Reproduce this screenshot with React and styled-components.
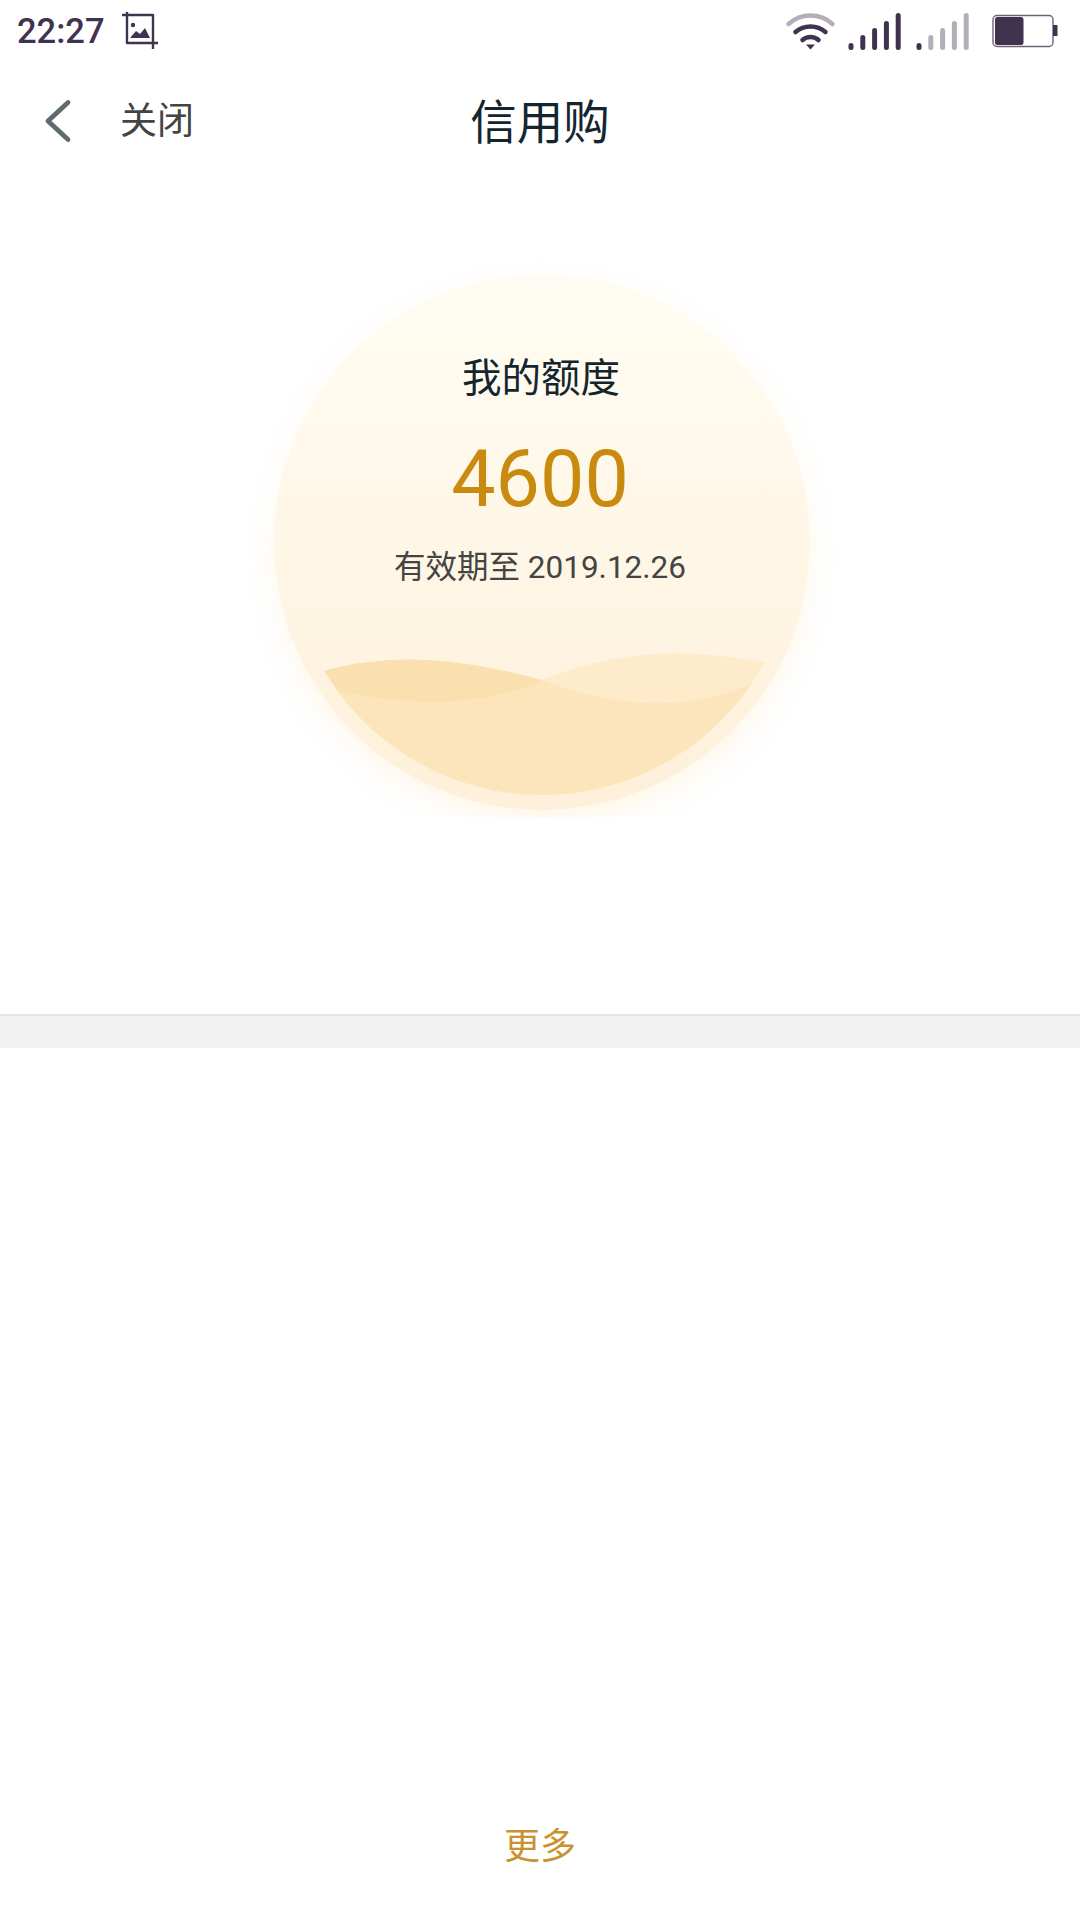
import React from "react";
import styled, { createGlobalStyle } from "styled-components";

const GlobalStyle = createGlobalStyle`
  html, body {
    margin: 0;
    padding: 0;
    background: #fff;
  }
  body {
    font-family: Roboto, "Noto Sans CJK SC", sans-serif;
  }
`;

const Page = styled.div`
  width: 1080px;
  height: 1920px;
  display: flex;
  flex-direction: column;
  background: #fff;
  overflow: hidden;
`;

// Status bar
const StatusBar = styled.div`
  height: 62px;
  display: flex;
  align-items: center;
  justify-content: space-between;
  padding-left: 17px;
`;

const StatusLeft = styled.div`
  display: flex;
  align-items: center;
  gap: 17px;
`;

const Time = styled.span`
  font-size: 34.5px;
  font-weight: 500;
  line-height: 64px;
  color: #3f334f;
`;

const StatusIcons = styled.svg`
  display: block;
  width: 300px;
  height: 62px;
`;

// Nav
const NavBar = styled.div`
  height: 112px;
  display: flex;
  align-items: center;
  position: relative;
`;

const BackButton = styled.div`
  width: 120px;
  display: flex;
  align-items: center;
  padding: 6px 0 0 42px;
  box-sizing: border-box;
`;

const CloseText = styled.span`
  font-size: 37px;
  color: #444;
`;

const Title = styled.h1`
  position: absolute;
  left: 0;
  right: 0;
  margin: 0;
  text-align: center;
  font-size: 46.5px;
  font-weight: 400;
  color: #14252e;
`;

// Credit circle
const Hero = styled.section`
  height: 643px;
  overflow: hidden;
  display: flex;
  justify-content: center;
  padding: 100px 0 0 4px;
  box-sizing: border-box;
`;

const Circle = styled.div`
  position: relative;
  flex: none;
  width: 536px;
  height: 536px;
  padding-right: 4px;
  box-sizing: border-box;
  border-radius: 50%;
  background: linear-gradient(180deg, #fffdf3 0%, #fef0da 100%);
  box-shadow: 0 12px 28px -4px rgba(253, 226, 178, 0.34);
  display: flex;
  flex-direction: column;
  align-items: center;
`;

const Waves = styled.svg`
  position: absolute;
  left: 0;
  top: 0;
  width: 536px;
  height: 536px;
`;

const CircleLabel = styled.div`
  position: relative;
  left: 1px;
  margin-top: 77px;
  font-size: 39.5px;
  line-height: 56px;
  color: #14252e;
`;

const Amount = styled.div`
  position: relative;
  margin-top: 25px;
  font-size: 79px;
  line-height: 94px;
  color: #c98a10;
`;

const Expiry = styled.div`
  position: relative;
  margin-top: 20px;
  font-size: 31.5px;
  line-height: 44px;
  color: #444;
`;

const Spacer = styled.div`
  height: 197px;
`;

const Band = styled.div`
  height: 32px;
  background: #f2f2f2;
  border-top: 2px solid #e6e6e6;
`;

const Content = styled.div`
  flex: 1;
  display: flex;
  flex-direction: column;
  justify-content: flex-end;
  align-items: center;
  padding-bottom: 47px;
`;

const More = styled.span`
  font-size: 36px;
  line-height: 52px;
  color: #c9922f;
`;

function PhotoIcon() {
  return (
    <svg width="36" height="38" viewBox="0 0 36 38" fill="none">
      <path
        d="M0 3h31v34M5 0v31h31"
        stroke="#3f334f"
        strokeWidth="2.4"
        strokeLinejoin="round"
      />
      <circle cx="11" cy="13" r="2.2" fill="#3f334f" />
      <path d="M8 26l6-7 4 3 5-6 5 10z" fill="#3f334f" />
    </svg>
  );
}

// bars of one signal group, x = left of the group in the 300 wide icon box
function SignalBars({ x, muted }) {
  const heights = [7, 15, 22, 29, 37];
  return heights.map((h, i) => (
    <rect
      key={i}
      x={x + i * 11.8}
      y={50 - h}
      width="5"
      height={h}
      rx="2.5"
      fill={i === 0 || !muted ? "#3f334f" : "#b3afb9"}
    />
  ));
}

function StatusGlyphs() {
  return (
    <StatusIcons viewBox="780 0 300 62">
      {/* wifi */}
      <path d="M788.5 24a33 33 0 0 1 44 0" stroke="#b3afb9" strokeWidth="4.5" strokeLinecap="round" fill="none" />
      <path d="M795.5 32a23 23 0 0 1 30 0" stroke="#3f334f" strokeWidth="4.5" strokeLinecap="round" fill="none" />
      <path d="M802.5 40a12 12 0 0 1 16 0" stroke="#3f334f" strokeWidth="4.5" strokeLinecap="round" fill="none" />
      <path d="M806 44.5h9l-4.5 5z" fill="#3f334f" />
      <SignalBars x={848.5} />
      <SignalBars x={916.5} muted />
      {/* battery */}
      <rect x="993" y="15.5" width="60" height="31" rx="4" fill="none" stroke="#6d6478" strokeWidth="1.4" />
      <rect x="995" y="17" width="28.5" height="28" rx="2.5" fill="#3f334f" />
      <rect x="1053" y="25" width="4.5" height="11" fill="#3f334f" />
    </StatusIcons>
  );
}

export default function App() {
  return (
    <Page>
      <GlobalStyle />
      <StatusBar>
        <StatusLeft>
          <Time>22:27</Time>
          <PhotoIcon />
        </StatusLeft>
        <StatusGlyphs />
      </StatusBar>

      <NavBar>
        <BackButton>
          <svg width="32" height="44" viewBox="0 0 32 44" fill="none">
            <path d="M26 3.5L6 22l20 18.5" stroke="#5f6b6e" strokeWidth="4.8" strokeLinecap="round" strokeLinejoin="round" />
          </svg>
        </BackButton>
        <CloseText>关闭</CloseText>
        <Title>信用购</Title>
      </NavBar>

      <Hero>
        <Circle>
          {/* viewBox is page coords of the circle, centre 542,542 */}
          <Waves viewBox="274 274 536 536">
            <defs>
              <clipPath id="inner">
                <circle cx="542" cy="542" r="253" />
              </clipPath>
            </defs>
            <g clipPath="url(#inner)">
              <path d="M310 675C380 652 450 655 542 680V710H310z" fill="#fae0ae" />
              <path d="M542 680C620 648 690 648 775 664V710H542z" fill="#feebcc" />
              <path d="M300 680C350 699 470 717 542 680C600 702 695 722 770 672V810H300z" fill="#fde5bb" />
            </g>
          </Waves>
          <CircleLabel>我的额度</CircleLabel>
          <Amount>4600</Amount>
          <Expiry>有效期至 2019.12.26</Expiry>
        </Circle>
      </Hero>
      <Spacer />
      <Band />
      <Content>
        <More>更多</More>
      </Content>
    </Page>
  );
}
